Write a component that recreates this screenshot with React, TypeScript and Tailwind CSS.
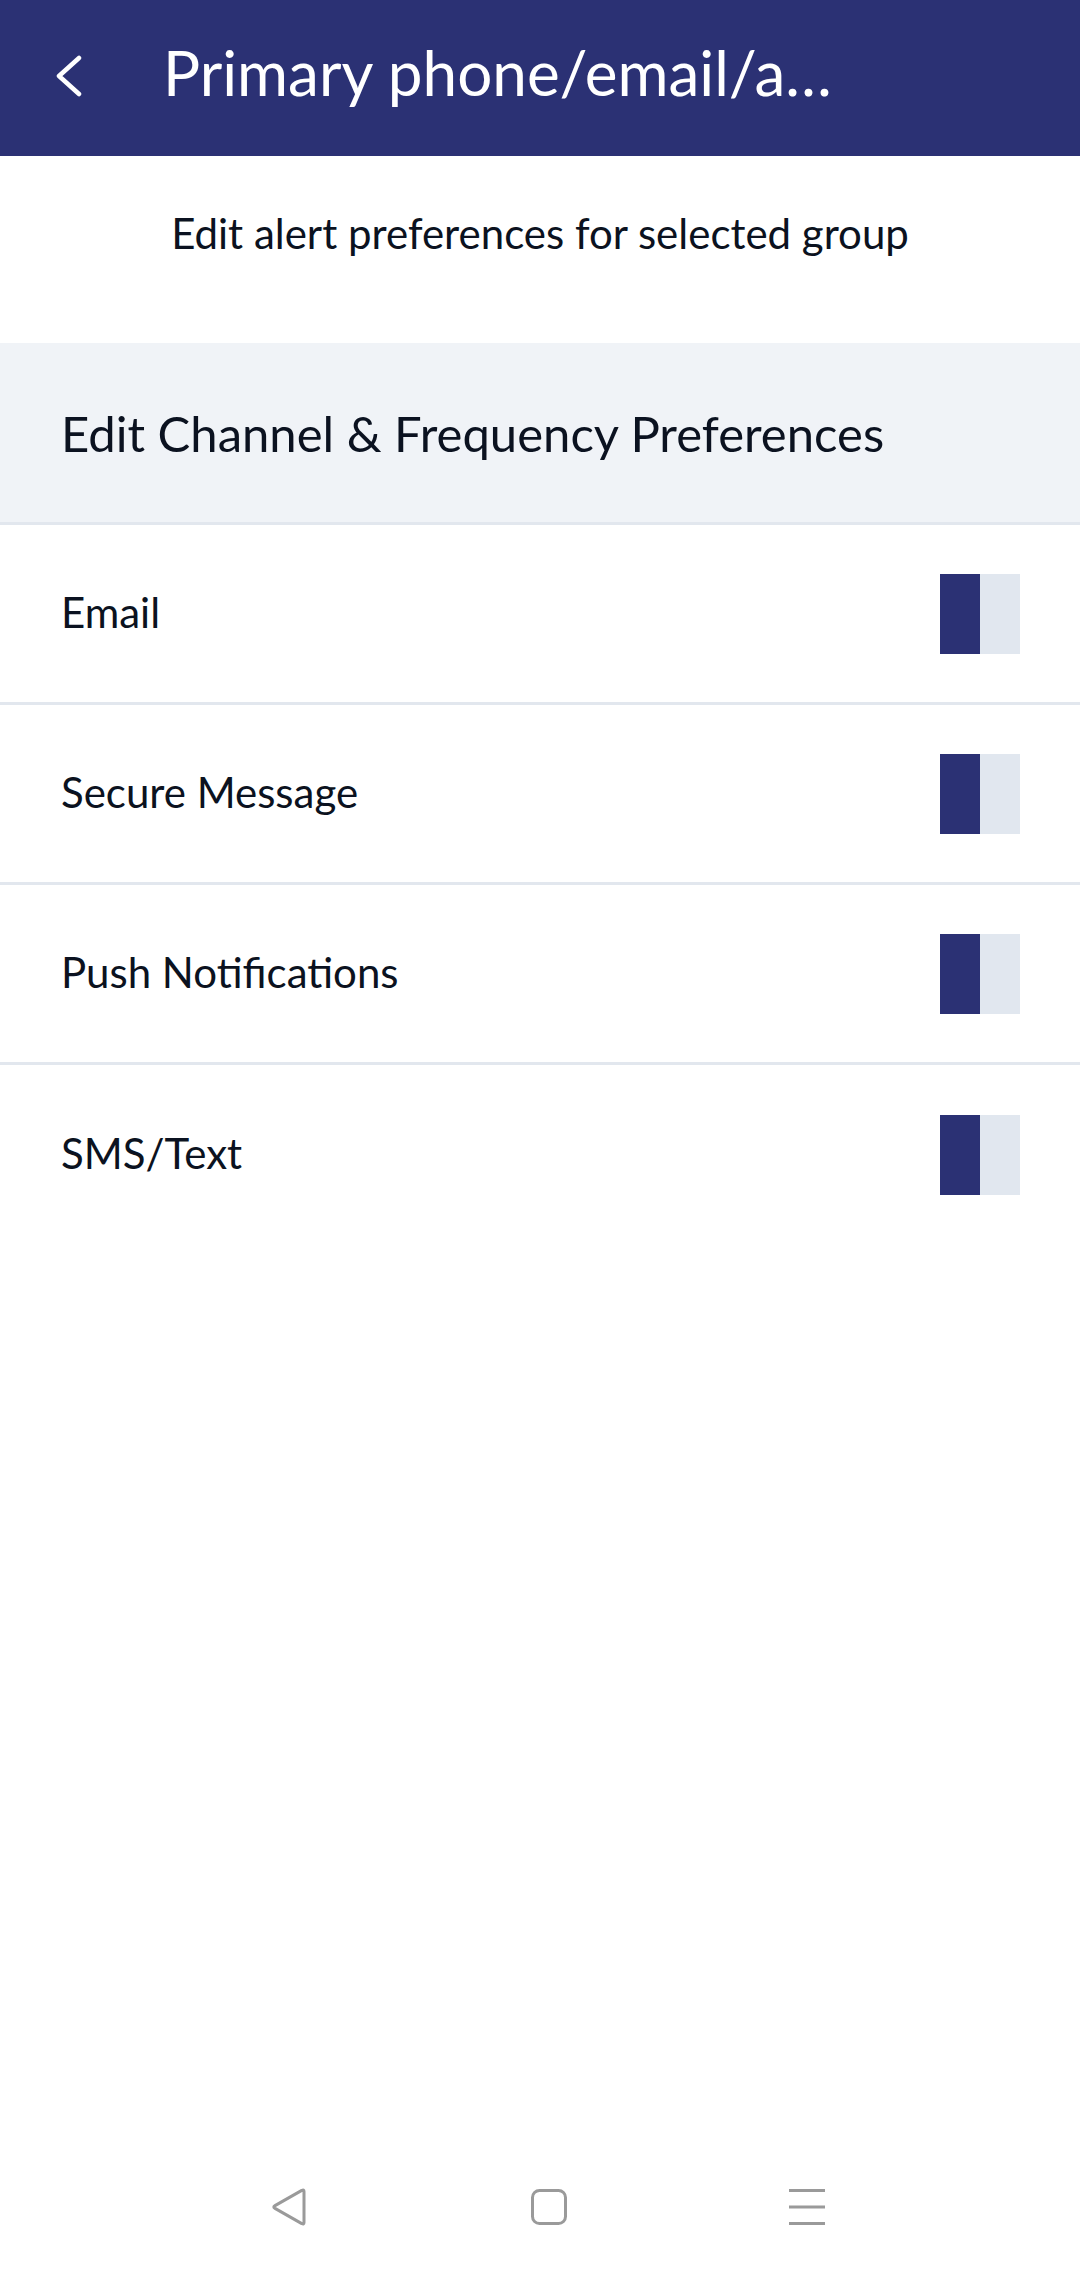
import React from 'react';

interface Channel {
  id: number;
  name: string;
}

const channels: Channel[] = [
  { id: 1, name: 'Email' },
  { id: 2, name: 'Secure Message' },
  { id: 3, name: 'Push Notifications' },
  { id: 4, name: 'SMS/Text' },
];

// square two-tone toggle, left half is the "on" colour
const ChannelToggle: React.FC = () => (
  <div className="flex h-[80px] w-[80px]">
    <div className="h-full w-1/2 bg-[#2b3174]" />
    <div className="h-full w-1/2 bg-[#e1e7ef]" />
  </div>
);

const NavBar: React.FC = () => (
  <div className="flex h-[134px] items-center justify-center gap-[222px] bg-white pl-[14px]">
    <svg width="40" height="40" viewBox="0 0 40 40" fill="none">
      <path
        d="M35 4.5 L35 35.5 Q35 38 32.8 36.6 L6 21.4 Q3.6 20 6 18.6 L32.8 3.4 Q35 2 35 4.5 Z"
        stroke="#9a9a9a"
        strokeWidth="3"
        strokeLinejoin="round"
      />
    </svg>
    <svg width="36" height="36" viewBox="0 0 36 36" fill="none">
      <rect x="1.5" y="1.5" width="33" height="33" rx="7" stroke="#9a9a9a" strokeWidth="3" />
    </svg>
    <svg width="36" height="36" viewBox="0 0 36 36" fill="none">
      <path d="M0 1.5 H36 M0 18 H36 M0 34.5 H36" stroke="#9a9a9a" strokeWidth="3" />
    </svg>
  </div>
);

const App: React.FC = () => {
  return (
    <div className="flex min-h-[2274px] flex-col bg-white font-['Lato',sans-serif] text-[#0b1220]">
      {/* top bar */}
      <div className="flex h-[156px] items-center bg-[#2b3174] pl-[54px]">
        <svg width="28" height="44" viewBox="0 0 28 44" fill="none" className="mb-[4px] shrink-0">
          <polyline
            points="25,4 5,22 25,40"
            stroke="white"
            strokeWidth="4.5"
            strokeLinecap="round"
            strokeLinejoin="round"
          />
        </svg>
        <h1 className="mb-[12px] ml-[81px] whitespace-nowrap text-[62px] leading-[74px] text-white">
          Primary phone/email/a…
        </h1>
      </div>

      <div className="h-[187px] pt-[52px] text-center text-[42px] leading-[50px]">
        Edit alert preferences for selected group
      </div>

      <div className="flex h-[182px] items-center border-b-[3px] border-[#e2e7ee] bg-[#f0f3f7] pl-[61px]">
        <h2 className="text-[49px] leading-[58px]">Edit Channel &amp; Frequency Preferences</h2>
      </div>

      {channels.map((channel, i) => (
        <div
          key={channel.id}
          className={
            i < channels.length - 1
              ? 'flex h-[180px] items-center justify-between border-b-[3px] border-[#e2e7ee] pl-[61px] pr-[60px]'
              : 'flex h-[180px] items-center justify-between pl-[61px] pr-[60px]'
          }
        >
          <span className="mb-[4px] text-[42px] leading-[52px]">{channel.name}</span>
          <ChannelToggle />
        </div>
      ))}

      <div className="flex-1" />
      <NavBar />
    </div>
  );
};

export default App;
